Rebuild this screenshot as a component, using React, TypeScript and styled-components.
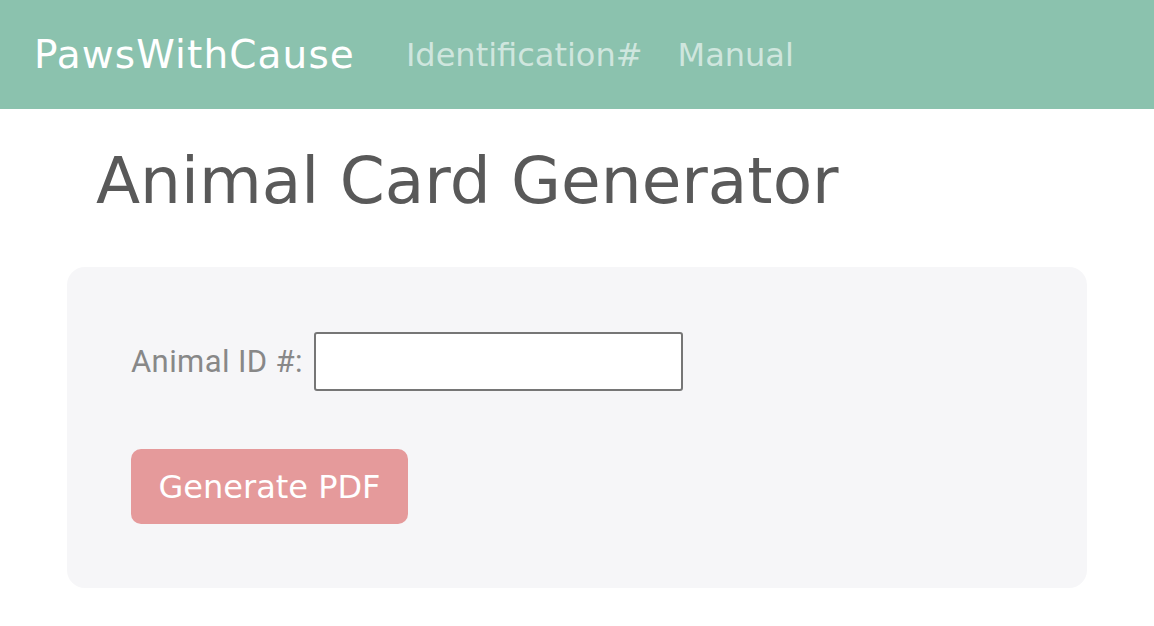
import React from "react";
import styled, { createGlobalStyle } from "styled-components";

const Global = createGlobalStyle`
  html, body { margin: 0; padding: 0; background: #ffffff; }
  body { font-family: "DejaVu Sans", "Open Sans", sans-serif; }
`;

const NavBar = styled.header`
  height: 109px;
  background: #8bc2ae;
  display: flex;
  align-items: center;
  padding-left: 34px;
  box-sizing: border-box;
`;

const Brand = styled.a`
  font-family: "DejaVu Sans", sans-serif;
  font-size: 39px;
  letter-spacing: 1.1px;
  color: #ffffff;
  text-decoration: none;
  margin-right: 51px;
  line-height: 1;
`;

const NavLinks = styled.nav`
  display: flex;
  gap: 35px;
`;

const NavLink = styled.a`
  font-family: "DejaVu Sans", sans-serif;
  font-size: 32px;
  color: rgba(255, 255, 255, 0.6);
  text-decoration: none;
  line-height: 1;
`;

const Main = styled.main`
  padding: 0 67px;
`;

const Title = styled.h1`
  font-family: "DejaVu Sans", sans-serif;
  font-weight: 400;
  font-size: 64.5px;
  color: #595959;
  margin: 0;
  padding: 33px 0 0 29px;
  line-height: 1.2;
`;

const Card = styled.section`
  margin-top: 48px;
  width: 1020px;
  box-sizing: border-box;
  background: #f6f6f8;
  border-radius: 18px;
  padding: 65px 64px 64px;
  display: flex;
  flex-direction: column;
  align-items: flex-start;
  gap: 58px;
`;

const Field = styled.div`
  display: flex;
  align-items: center;
  gap: 11px;
`;

const Label = styled.label`
  font-family: "Roboto", sans-serif;
  font-size: 31px;
  color: #888888;
  letter-spacing: 0.4px;
`;

const Input = styled.input`
  width: 369px;
  height: 59px;
  box-sizing: border-box;
  border: 2px solid #767676;
  border-radius: 3px;
  background: #ffffff;
  font-size: 24px;
  padding: 0 8px;
  outline: none;
`;

const Button = styled.button`
  height: 75px;
  width: 277px;
  border: none;
  border-radius: 10px;
  background: #e59a9b;
  color: #ffffff;
  font-family: "DejaVu Sans", sans-serif;
  font-size: 32px;
  cursor: pointer;
  padding: 0;
`;

export default function App() {
  return (
    <>
      <Global />
      <NavBar>
        <Brand href="#">PawsWithCause</Brand>
        <NavLinks>
          <NavLink href="#">Identification#</NavLink>
          <NavLink href="#">Manual</NavLink>
        </NavLinks>
      </NavBar>
      <Main>
        <Title>Animal Card Generator</Title>
        <Card>
          <Field>
            <Label htmlFor="animal-id">Animal ID #:</Label>
            <Input id="animal-id" type="text" />
          </Field>
          <Button type="button">Generate PDF</Button>
        </Card>
      </Main>
    </>
  );
}
